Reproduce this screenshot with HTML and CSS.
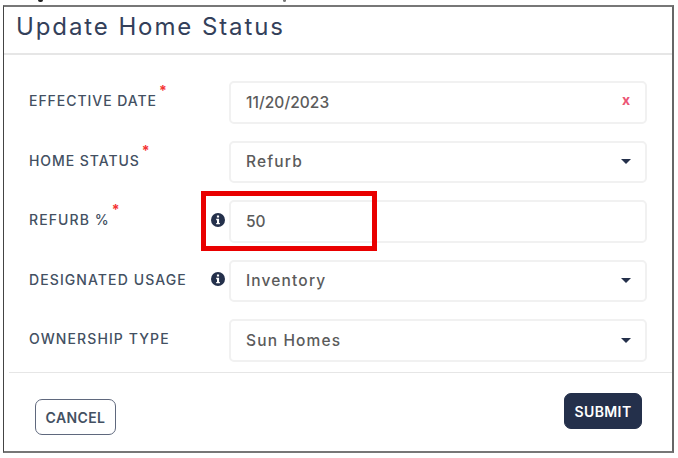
FILE: index.html
```html
<!DOCTYPE html>
<html lang="en">
<head>
    <meta charset="UTF-8">
    <meta name="viewport" content="width=device-width, initial-scale=1.0">
    <title>Update Home Status</title>
    <link rel="stylesheet" href="styles.css">
</head>
<body>
    <!-- Tails of the line above the dialog -->
    <div class="cut-line"><span class="tail"></span><span class="tail small"></span></div>

    <main class="modal">
        <header>
            <h1>Update Home Status</h1>
        </header>

        <!-- Form -->
        <form id="status-form">
            <div class="row">
                <div class="label"><span class="label-text date">EFFECTIVE DATE</span><span class="required">*</span></div>
                <div class="field"><span class="value date-value">11/20/2023</span><span class="clear">x</span></div>
            </div>
            <div class="row">
                <div class="label"><span class="label-text status">HOME STATUS</span><span class="required">*</span></div>
                <div class="field"><span class="value">Refurb</span><span class="caret"></span></div>
            </div>
            <div class="row">
                <div class="label">
                    <span class="label-text">REFURB %</span><span class="required">*</span>
                    <svg class="info" viewBox="0 0 14 14"><circle cx="7" cy="7" r="7"/><path d="M5.9 2.5h2.2v2H5.9zM5.2 5.8h2.9v4.1h.8v1.4H5.2V9.9H6V7.2h-.8z"/></svg>
                </div>
                <div class="field"><span class="value number">50</span></div>
                <div class="highlight"></div>
            </div>
            <div class="row">
                <div class="label">
                    <span class="label-text">DESIGNATED USAGE</span>
                    <svg class="info" viewBox="0 0 14 14"><circle cx="7" cy="7" r="7"/><path d="M5.9 2.5h2.2v2H5.9zM5.2 5.8h2.9v4.1h.8v1.4H5.2V9.9H6V7.2h-.8z"/></svg>
                </div>
                <div class="field"><span class="value">Inventory</span><span class="caret"></span></div>
            </div>
            <div class="row">
                <div class="label"><span class="label-text">OWNERSHIP TYPE</span></div>
                <div class="field"><span class="value">Sun Homes</span><span class="caret"></span></div>
            </div>
        </form>

        <!-- Footer -->
        <footer>
            <button type="button" class="cancel">CANCEL</button>
            <button type="submit" form="status-form" class="submit">SUBMIT</button>
        </footer>
    </main>
</body>
</html>
```

FILE: styles.css
```css
/* General Styles */
* {
    box-sizing: border-box;
}

body {
    font-family: Inter, "Liberation Sans", sans-serif;
    margin: 0;
    background-color: #fff;
    color: #435062;
    overflow: hidden;
}

.cut-line {
    display: flex;
    gap: 240px;
    height: 5px;
    padding-left: 38px;
}

.tail {
    width: 5px;
    height: 2px;
    border-radius: 0 0 3px 3px;
    background-color: #222;
}

.tail.small {
    width: 3px;
    background-color: #777;
}

.modal {
    width: 671px;
    height: 448px;
    margin-left: 3px;
    border: 2px solid #777;
    border-left: 1px solid #444;
    border-right-color: #666;
}

/* Header Styles */
header {
    height: 48px;
    padding-left: 12px;
    border-bottom: 2px solid #e6e6e6;
}

h1 {
    margin: 0;
    color: #33405a;
    font-size: 24px;
    font-weight: 400;
    line-height: 40px;
    letter-spacing: 1.9px;
}

/* Form Styles */
form {
    display: flex;
    flex-direction: column;
    gap: 17px;
    height: 318px;
    margin-left: 5px;
    padding: 26px 25px 0 20px;
    border-bottom: 1px solid #e6e6e6;
}

.row {
    position: relative;
    display: grid;
    grid-template-columns: 200px 418px;
    height: 42.5px;
    flex-shrink: 0;
}

.label {
    display: flex;
    align-items: center;
    padding: 0 4px 3px 0;
    font-size: 14px;
    font-weight: 500;
    white-space: nowrap;
}

.label-text {
    letter-spacing: 1.1px;
}

.label-text.date,
.label-text.status {
    letter-spacing: 0.95px;
}

.required {
    align-self: flex-start;
    margin: 3px 0 0 2px;
    color: #f43535;
    font-size: 14px;
    font-weight: 700;
    line-height: 14px;
}

.info {
    width: 14px;
    height: 14px;
    margin-left: auto;
    fill: #24304b;
}

.info path {
    fill: #fff;
}

.field {
    display: flex;
    align-items: center;
    justify-content: space-between;
    padding: 0 15px;
    border: 2px solid #f1f1f1;
    border-radius: 5px;
}

.value {
    color: #5b5b5b;
    font-size: 15.5px;
    font-weight: 500;
    letter-spacing: 1.15px;
}

.value.date-value {
    letter-spacing: 0.05px;
}

.value.number {
    letter-spacing: 0;
}

.clear {
    color: #ec5575;
    font-size: 14px;
    font-weight: 700;
    line-height: 14px;
    margin: -4px 0 0;
}

.caret {
    border: 5px solid transparent;
    border-top-color: #24304b;
    border-bottom: 0;
    margin-right: -1px;
}

.highlight {
    position: absolute;
    top: -9px;
    left: 172px;
    width: 176px;
    height: 60px;
    border: 5px solid #e90000;
}

/* Footer Styles */
footer {
    display: flex;
    justify-content: space-between;
    align-items: flex-start;
    padding: 20px 30px 0 31px;
}

button {
    height: 36px;
    padding: 0;
    border: 1px solid #5f687d;
    border-radius: 7px;
    background-color: #fff;
    color: #435062;
    font-family: inherit;
    font-size: 14px;
    font-weight: 600;
    letter-spacing: 0.4px;
}

.cancel {
    width: 81px;
    margin-top: 6px;
}

.submit {
    width: 78px;
    border-color: #24304b;
    background-color: #24304b;
    color: #fff;
}
```
